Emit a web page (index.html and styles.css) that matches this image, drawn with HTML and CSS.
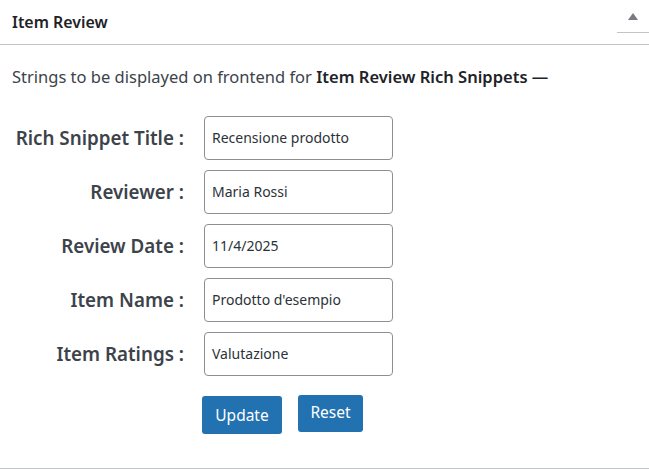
FILE: index.html
```html
<!DOCTYPE html>
<html>
<head>
<meta charset="utf-8">
<link rel="stylesheet" href="styles.css">
</head>
<body>
<div class="box">
  <div class="box-head">
    <h2 class="box-title">Item Review</h2>
    <div class="toggle"><span class="tri"></span></div>
  </div>
  <div class="box-body">
    <p class="desc">Strings to be displayed on frontend for <strong>Item Review Rich Snippets —</strong></p>
    <div class="form">
      <label class="lbl">Rich Snippet Title :</label>
      <div class="field">Recensione prodotto</div>
      <label class="lbl">Reviewer :</label>
      <div class="field">Maria Rossi</div>
      <label class="lbl">Review Date :</label>
      <div class="field">11/4/2025</div>
      <label class="lbl">Item Name :</label>
      <div class="field">Prodotto d'esempio</div>
      <label class="lbl">Item Ratings :</label>
      <div class="field">Valutazione</div>
      <div></div>
      <div class="actions">
        <button class="btn btn-update">Update</button>
        <button class="btn btn-reset">Reset</button>
      </div>
    </div>
  </div>
</div>
</body>
</html>
```
FILE: styles.css
```css
* { box-sizing: border-box; }
html, body { margin: 0; padding: 0; background: #fff; }
body {
  font-family: "Noto Sans", "Open Sans", sans-serif;
  color: #1d2327;
  width: 649px;
  height: 469px;
  overflow: hidden;
}
.box {
  border-bottom: 1px solid #c3c4c7;
  height: 469px;
}
.box-head {
  height: 45px;
  border-bottom: 1px solid #c3c4c7;
  display: flex;
  align-items: flex-start;
  justify-content: space-between;
}
.box-title {
  margin: 0;
  padding: 12px 12px 0;
  font-size: 15.9px;
  font-weight: 600;
  line-height: 20px;
  color: #1d2327;
}
.toggle {
  width: 32px;
  height: 33px;
  border-bottom: 1px solid #c3c4c7;
  display: flex;
  justify-content: center;
  padding-top: 13px;
}
.tri {
  width: 0; height: 0;
  border-left: 5px solid transparent;
  border-right: 5px solid transparent;
  border-bottom: 7px solid #787c82;
}
.box-body { padding: 0 12px; }
.desc {
  margin: 22px 0 0;
  font-size: 16.5px;
  line-height: 20px;
  color: #3c434a;
}
.desc strong { font-weight: 600; color: #1d2327; }
.form {
  margin-top: 29px;
  display: grid;
  grid-template-columns: 172px 189px;
  column-gap: 20px;
  row-gap: 10px;
  align-items: center;
}
.lbl {
  text-align: right;
  font-size: 18.8px;
  font-weight: 600;
  color: #3c434a;
}
.field {
  height: 44px;
  border: 1px solid #8c8f94;
  border-radius: 4px;
  padding: 0 7px;
  display: flex;
  align-items: center;
  font-size: 14px;
  color: #2c3338;
  padding-bottom: 2px;
}
.actions {
  margin-top: 9px;
  margin-left: -2px;
  display: flex;
  align-items: flex-start;
  gap: 16px;
}
.btn {
  border: 0;
  background: #2271b1;
  color: #fff;
  border-radius: 3px;
  font-family: inherit;
  font-size: 15.5px;
  padding: 0;
}
.btn-update { width: 80px; height: 38px; margin-top: 1px; }
.btn-reset { width: 65px; height: 37px; padding-bottom: 4px; }
```
